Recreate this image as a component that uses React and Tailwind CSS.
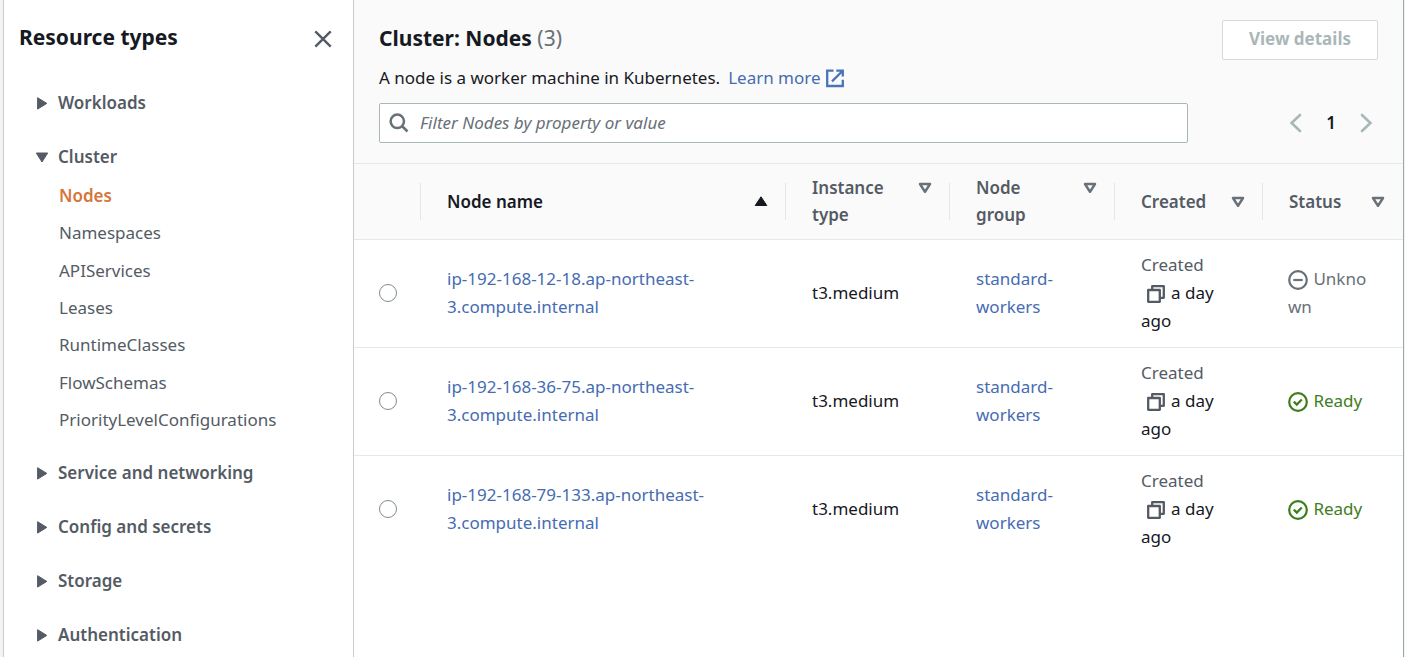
import React from "react";

const CLUSTER_ITEMS = [
  "Nodes",
  "Namespaces",
  "APIServices",
  "Leases",
  "RuntimeClasses",
  "FlowSchemas",
  "PriorityLevelConfigurations",
];

const NODES = [
  { name: "ip-192-168-12-18.ap-northeast-3.compute.internal", status: "Unknown" },
  { name: "ip-192-168-36-75.ap-northeast-3.compute.internal", status: "Ready" },
  { name: "ip-192-168-79-133.ap-northeast-3.compute.internal", status: "Ready" },
];

function Caret({ open }) {
  return (
    <svg className="h-4 w-4 shrink-0" viewBox="0 0 16 16" fill="#545b64" stroke="#545b64" strokeLinejoin="round" aria-hidden="true">
      {open ? <path d="M2.3 4h11.4L8 13z" /> : <path d="M3.6 2.7v11.4L12.8 8.4z" />}
    </svg>
  );
}

function Section({ title, open, children }) {
  return (
    <li>
      <button type="button" aria-expanded={!!open} className="flex h-7 items-center gap-2 text-[17px] leading-7 font-semibold text-[#545b64]">
        <Caret open={open} />
        {title}
      </button>
      {children}
    </li>
  );
}

function Sidebar() {
  return (
    <nav aria-label="Resource types" className="w-[350px] shrink-0 border-r border-[#c8cccc] bg-white">
      <div className="flex items-end justify-between pt-5 pr-5 pl-[15px]">
        <h2 className="text-[21px] leading-[34px] font-bold text-[#16191f]">Resource types</h2>
        <button type="button" aria-label="Close" className="mb-[5px] flex h-5 w-5 items-center justify-center">
          <svg className="h-5 w-5" viewBox="0 0 20 20" fill="none" stroke="#545b64" strokeWidth="2.4" aria-hidden="true">
            <path d="M2.3 2.3l15.4 15.4M17.7 2.3L2.3 17.7" />
          </svg>
        </button>
      </div>
      <ul className="flex flex-col gap-[26px] pt-[35px] pl-[30px]">
        <Section title="Workloads" />
        <Section title="Cluster" open>
          <ul className="mt-[6px] -mb-[6px] grid h-[262px] auto-rows-fr items-center pl-[25px] text-[17px] leading-7">
            {CLUSTER_ITEMS.map((item, i) => (
              <li key={item}>
                <a href="#" className={i === 0 ? "font-semibold text-[#d5763b]" : "text-[#545b64]"}>
                  {item}
                </a>
              </li>
            ))}
          </ul>
        </Section>
        <Section title="Service and networking" />
        <Section title="Config and secrets" />
        <Section title="Storage" />
        <Section title="Authentication" />
      </ul>
    </nav>
  );
}

function ExternalIcon() {
  return (
    <svg className="h-5 w-5" viewBox="0 0 20 20" fill="none" stroke="#4a74b8" strokeWidth="2.3" aria-hidden="true">
      <path d="M8.5 2.6H2.2v15.4h15.6v-6.2" />
      <path d="M11.3 2.6h6.5v6M17.2 3.2L7 13.4" />
    </svg>
  );
}

function CopyIcon() {
  return (
    <svg className="h-5 w-5" viewBox="0 0 20 20" fill="none" stroke="#545b64" strokeWidth="2.3" strokeLinejoin="round" aria-hidden="true">
      <path d="M2.2 6h11.6v11.8H2.2z" />
      <path d="M6.2 5.5V2.2h11.6v11.6h-3.5" />
    </svg>
  );
}

function StatusIcon({ ready }) {
  return ready ? (
    <svg className="mr-px inline-block h-5 w-5 align-middle" viewBox="0 0 20 20" fill="none" stroke="#3d7d1c" strokeWidth="2.2" aria-hidden="true">
      <circle cx="10" cy="10" r="8.8" />
      <path d="M5.8 9.6l3 3 5-5.2" />
    </svg>
  ) : (
    <svg className="mr-px inline-block h-5 w-5 align-middle" viewBox="0 0 20 20" fill="none" stroke="#687078" strokeWidth="2.2" aria-hidden="true">
      <circle cx="10" cy="10" r="8.8" />
      <path d="M5.3 10h9.4" />
    </svg>
  );
}

function HeaderCell({ label, sorted, last }) {
  return (
    <th scope="col" aria-sort={sorted ? "ascending" : undefined} className="p-0 text-left font-semibold">
      <div className="flex items-center">
        <button
          type="button"
          className={`flex min-w-0 flex-1 items-start justify-between gap-5 pr-[17px] pl-[26px] text-left leading-[27px] ${sorted ? "text-[#16191f]" : "text-[#545b64]"}`}
        >
          <span>{label}</span>
          <svg className="h-[27px] w-[14px] shrink-0" viewBox="0 0 14 27" strokeLinejoin="round" aria-hidden="true">
            {sorted ? (
              <path d="M1.2 17.5h11.6L7 8.8z" fill="#16191f" stroke="#16191f" />
            ) : (
              <path d="M2 10h10L7 17.8z" fill="none" stroke="#687078" strokeWidth="2.5" />
            )}
          </svg>
        </button>
        <span className={`h-[37px] w-px ${last ? "bg-transparent" : "bg-[#e4e7e7]"}`} />
      </div>
    </th>
  );
}

function NodesTable() {
  return (
    <table className="w-full table-fixed border-collapse text-[17px] leading-7">
      <colgroup>
        <col className="w-[67px]" />
        <col />
        <col className="w-[164px]" />
        <col className="w-[165px]" />
        <col className="w-[148px]" />
        <col className="w-[140px]" />
      </colgroup>
      <thead>
        <tr className="h-[75px] border-b border-[#e6e9e9] bg-[#fafafa]">
          <td className="p-0">
            <div className="ml-auto h-[37px] w-px bg-[#e4e7e7]" />
          </td>
          <HeaderCell label="Node name" sorted />
          <HeaderCell label="Instance type" />
          <HeaderCell label="Node group" />
          <HeaderCell label="Created" />
          <HeaderCell label="Status" last />
        </tr>
      </thead>
      <tbody>
        {NODES.map(({ name, status }) => (
          <tr key={name} className="border-b border-[#e6e9e9] last:border-b-0">
            <td className="p-0 pl-[25px]">
              <input
                type="radio"
                name="node"
                aria-label={name}
                className="block h-[18px] w-[18px] appearance-none rounded-full border border-[#7f8c8d] bg-white checked:border-[5px] checked:border-[#0073bb]"
              />
            </td>
            <td className="pt-[11px] pr-10 pb-3 pl-[26px]">
              <a href="#" className="text-[#466cb2]">{name}</a>
            </td>
            <td className="pt-[11px] pb-3 pl-[26px] text-[#16191f]">t3.medium</td>
            <td className="pt-[11px] pr-5 pb-3 pl-[26px]">
              <a href="#" className="text-[#466cb2]">standard-workers</a>
            </td>
            <td className="pt-[11px] pr-5 pb-3 pl-[26px] text-[#16191f]">
              <div className="text-[#545b64]">Created</div>
              <button type="button" aria-label="Copy created time" className="mr-[5px] ml-[5px] inline-block align-middle">
                <CopyIcon />
              </button>
              a day ago
            </td>
            <td className={`pt-[11px] pr-[25px] pb-3 pl-[25px] break-all ${status === "Ready" ? "text-[#3d7d1c]" : "text-[#687078]"}`}>
              <StatusIcon ready={status === "Ready"} /> {status}
            </td>
          </tr>
        ))}
      </tbody>
    </table>
  );
}

export default function App() {
  return (
    <div className="min-h-screen bg-[#f2f3f3] pr-px pl-[3px] font-['Noto_Sans',sans-serif]">
      <div className="flex min-h-screen border-r border-l border-r-[#9ba7a7] border-l-[#c8cccc] bg-white">
        <Sidebar />
        <main className="min-w-0 flex-1 bg-white">
          <header className="border-b border-[#e6e9e9] bg-[#fafafa] px-[25px] pt-5 pb-5">
            <div className="flex items-start justify-between">
              <div>
                <h1 className="text-[21px] leading-9 font-bold text-[#16191f]">
                  Cluster: Nodes <span className="font-normal text-[#687078]">(3)</span>
                </h1>
                <p className="mt-2 flex items-center text-[17px] leading-7 text-[#16191f]">
                  A node is a worker machine in Kubernetes.
                  <a href="#" className="ml-2 flex items-center gap-1 text-[#466cb2]">
                    Learn more <ExternalIcon />
                  </a>
                </p>
              </div>
              <button type="button" disabled className="h-10 rounded-[2px] border border-[#d5dbdb] bg-white px-[26px] pb-[2px] text-[17px] font-bold text-[#aab7b8]">
                View details
              </button>
            </div>
            <div className="mt-[11px] flex items-center justify-between">
              <label className="flex h-10 w-[81%] items-center gap-[11px] rounded-[2px] border border-[#aab7b8] bg-white pl-[9px]">
                <svg className="h-5 w-5 shrink-0" viewBox="0 0 20 20" fill="none" stroke="#687078" strokeWidth="2.5" aria-hidden="true">
                  <circle cx="8.3" cy="8.3" r="6.7" />
                  <path d="M13 13l5.5 5.5" />
                </svg>
                <input
                  type="text"
                  aria-label="Filter Nodes"
                  placeholder="Filter Nodes by property or value"
                  className="h-full min-w-0 flex-1 bg-transparent pb-[2px] text-[17px] outline-none placeholder:text-[#687078] placeholder:italic"
                />
              </label>
              <div className="flex items-center gap-5 pr-[2px]">
                <button type="button" disabled aria-label="Previous page">
                  <svg className="h-5 w-5" viewBox="0 0 20 20" fill="none" stroke="#aab7b8" strokeWidth="2.6" strokeLinecap="round" aria-hidden="true">
                    <path d="M14 2L5.6 10l8.4 8" />
                  </svg>
                </button>
                <button type="button" aria-current="page" className="text-[17px] leading-7 font-semibold text-[#16191f]">1</button>
                <button type="button" disabled aria-label="Next page">
                  <svg className="h-5 w-5" viewBox="0 0 20 20" fill="none" stroke="#aab7b8" strokeWidth="2.6" strokeLinecap="round" aria-hidden="true">
                    <path d="M6 2l8.4 8L6 18" />
                  </svg>
                </button>
              </div>
            </div>
          </header>
          <NodesTable />
        </main>
      </div>
    </div>
  );
}
